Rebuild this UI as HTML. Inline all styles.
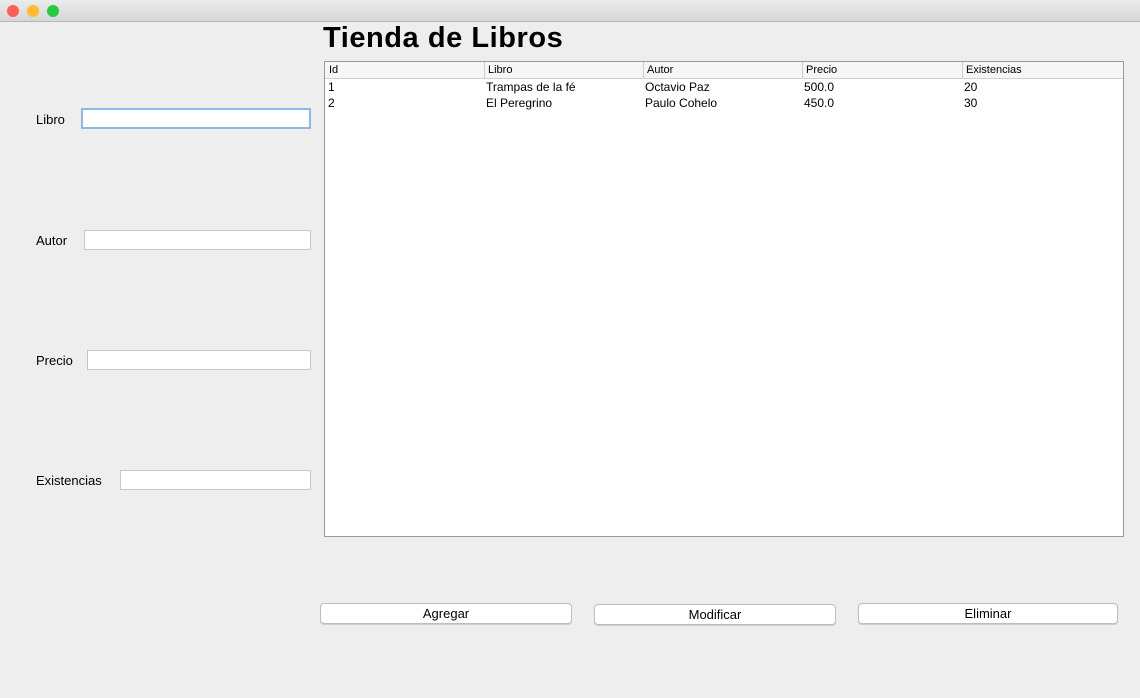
<!DOCTYPE html>
<html><head><style>
*{box-sizing:border-box}
body{margin:0;width:1140px;height:698px;background:#eeeeee;font-family:"Liberation Sans",sans-serif;position:relative;overflow:hidden}
.t{position:absolute}
.bar{left:0;top:0;width:1140px;height:22px;background:linear-gradient(#ececec,#d6d6d6);border-bottom:1px solid #b5b5b5}
.dot{position:absolute;top:5px;width:12px;height:12px;border-radius:6px}
.lbl{font-size:13px;color:#000}
.in{background:#fff;border:1px solid #c6c6c6;height:20px}
.btn{background:#fff;border:1px solid #bdbdbd;border-radius:4px;height:21px;font-size:13px;text-align:center;line-height:19px;box-shadow:0 1px 0 #ccc}
.cell{font-size:12px;position:absolute}
.hd{font-size:11px;position:absolute;top:0;height:16px;line-height:16px;border-left:1px solid #ccc;padding-left:3px}
</style></head><body>
<div class="t bar"></div>
<div class="dot" style="left:7px;background:#fd5f57"></div>
<div class="dot" style="left:27px;background:#febc2e"></div>
<div class="dot" style="left:47px;background:#28c840"></div>
<div class="t" style="left:323px;top:22px;font-size:29px;font-weight:bold;letter-spacing:0.55px">Tienda de Libros</div>
<div class="t lbl" style="left:36px;top:112px">Libro</div>
<div class="t in" style="left:81px;top:108px;width:230px;border:2px solid #8bb8ee;height:21px"></div>
<div class="t lbl" style="left:36px;top:233px">Autor</div>
<div class="t in" style="left:84px;top:230px;width:227px"></div>
<div class="t lbl" style="left:36px;top:353px">Precio</div>
<div class="t in" style="left:87px;top:350px;width:224px"></div>
<div class="t lbl" style="left:36px;top:473px">Existencias</div>
<div class="t in" style="left:120px;top:470px;width:191px"></div>
<div class="t" style="left:324px;top:61px;width:800px;height:476px;background:#fff;border:1px solid #9a9a9a">
 <div style="position:absolute;left:0;top:0;width:798px;height:17px;background:#f6f6f6;border-bottom:1px solid #d0d0d0">
  <div class="hd" style="left:0;border:none;padding-left:4px">Id</div>
  <div class="hd" style="left:159px">Libro</div>
  <div class="hd" style="left:318px">Autor</div>
  <div class="hd" style="left:477px">Precio</div>
  <div class="hd" style="left:637px">Existencias</div>
 </div>
 <div class="cell" style="left:3px;top:18px">1</div>
 <div class="cell" style="left:161px;top:18px">Trampas de la fé</div>
 <div class="cell" style="left:320px;top:18px">Octavio Paz</div>
 <div class="cell" style="left:479px;top:18px">500.0</div>
 <div class="cell" style="left:639px;top:18px">20</div>
 <div class="cell" style="left:3px;top:34px">2</div>
 <div class="cell" style="left:161px;top:34px">El Peregrino</div>
 <div class="cell" style="left:320px;top:34px">Paulo Cohelo</div>
 <div class="cell" style="left:479px;top:34px">450.0</div>
 <div class="cell" style="left:639px;top:34px">30</div>
</div>
<div class="t btn" style="left:320px;top:603px;width:252px">Agregar</div>
<div class="t btn" style="left:594px;top:604px;width:242px">Modificar</div>
<div class="t btn" style="left:858px;top:603px;width:260px">Eliminar</div>
</body></html>
